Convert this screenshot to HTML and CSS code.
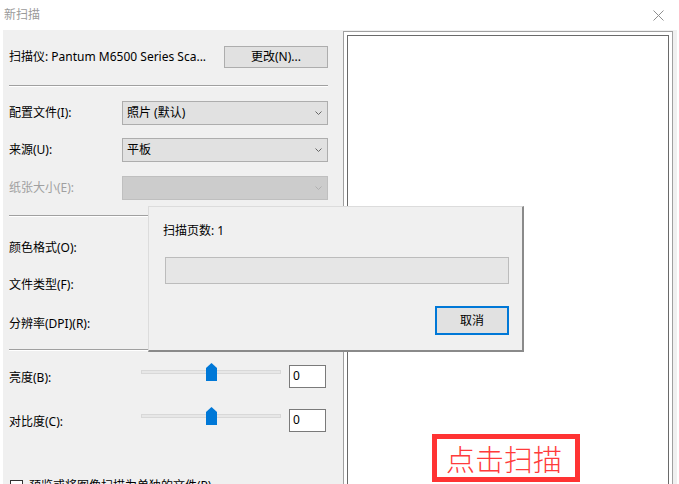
FILE: index.html
```html
<!DOCTYPE html>
<html lang="zh-CN">
<head>
<meta charset="utf-8">
<title>新扫描</title>
<link rel="stylesheet" href="styles.css">
</head>
<body>
<div class="titlebar">
  <span class="title">新扫描</span>
  <svg class="close" viewBox="0 0 11 11" width="11" height="11"><path d="M0.5 0.5 L10.5 10.5 M10.5 0.5 L0.5 10.5" stroke="#8f8f8f" stroke-width="1" fill="none"/></svg>
</div>
<div class="main">
  <div class="settings">
    <div class="row scanner">
      <span>扫描仪: Pantum M6500 Series Sca...</span>
      <button class="btn">更改(N)...</button>
    </div>
    <div class="sep sep1"></div>
    <div class="row field mt14">
      <span class="label">配置文件(I):</span>
      <div class="select"><span>照片 (默认)</span><svg class="chev" viewBox="0 0 7 4" width="7" height="4"><path d="M0.5 0.5 L3.5 3.5 L6.5 0.5" stroke="#666" fill="none"/></svg></div>
    </div>
    <div class="row field mt13">
      <span class="label">来源(U):</span>
      <div class="select"><span>平板</span><svg class="chev" viewBox="0 0 7 4" width="7" height="4"><path d="M0.5 0.5 L3.5 3.5 L6.5 0.5" stroke="#666" fill="none"/></svg></div>
    </div>
    <div class="row field mt14">
      <span class="label disabled">纸张大小(E):</span>
      <div class="select off"><span></span><svg class="chev" viewBox="0 0 7 4" width="7" height="4"><path d="M0.5 0.5 L3.5 3.5 L6.5 0.5" stroke="#b0b0b0" fill="none"/></svg></div>
    </div>
    <div class="sep sep2"></div>
    <div class="row field mt19"><span class="label">颜色格式(O):</span></div>
    <div class="row field mt13"><span class="label">文件类型(F):</span></div>
    <div class="row field mt15"><span class="label">分辨率(DPI)(R):</span></div>
    <div class="sep sep3"></div>
    <div class="row adjust mt14">
      <span class="alabel">亮度(B):</span>
      <div class="slider"><div class="track"></div><svg class="thumb" viewBox="0 0 11 18" width="11" height="18"><path d="M0 5 L5.5 0 L11 5 L11 18 L0 18 Z" fill="#0078d7"/></svg></div>
      <div class="num">0</div>
    </div>
    <div class="row adjust mt21">
      <span class="alabel">对比度(C):</span>
      <div class="slider"><div class="track"></div><svg class="thumb" viewBox="0 0 11 18" width="11" height="18"><path d="M0 5 L5.5 0 L11 5 L11 18 L0 18 Z" fill="#0078d7"/></svg></div>
      <div class="num">0</div>
    </div>
    <div class="row check">
      <span class="box"></span>
      <span>预览或将图像扫描为单独的文件(P)</span>
    </div>
  </div>
  <div class="preview"><div class="preview-inner"></div></div>
</div>

<div class="progress-dialog">
  <div class="pages">扫描页数: 1</div>
  <div class="bar"></div>
  <div class="actions"><button class="btn cancel">取消</button></div>
</div>

<div class="callout">点击扫描</div>
</body>
</html>
```
FILE: styles.css
```css
html, body {
  margin: 0;
  height: 100%;
  overflow: hidden;
}
body {
  background: #fff;
  font-family: "Noto Sans", "Noto Sans CJK SC", sans-serif;
  font-size: 12px;
  line-height: 14px;
  color: #000;
  position: relative;
}
.titlebar {
  height: 30px;
  display: flex;
  align-items: center;
  justify-content: space-between;
  padding: 0 15px 0 4px;
  box-sizing: border-box;
}
.title {
  color: #9a9a9a;
}
.close {
  display: block;
}
.main {
  display: flex;
  margin: 0 2px 0 3px;
  height: 454px;
  background: #f0f0f0;
  overflow: hidden;
}
.settings {
  width: 340px;
  flex: none;
  box-sizing: border-box;
  padding: 16px 15px 0 6px;
  display: flex;
  flex-direction: column;
}
.settings > * {
  flex: none;
}
.row {
  display: flex;
  align-items: center;
}
.scanner {
  height: 22px;
  justify-content: space-between;
}
.btn {
  width: 104px;
  height: 22px;
  background: #e1e1e1;
  border: 1px solid #adadad;
  font: inherit;
  color: #000;
  padding: 0;
  box-sizing: border-box;
}
.sep {
  border-top: 1px solid #a0a0a0;
  border-bottom: 1px solid #fff;
}
.sep1 { margin-top: 17px; }
.sep2 { margin-top: 15px; }
.sep3 { margin-top: 13px; }
.mt13 { margin-top: 13px; }
.mt14 { margin-top: 14px; }
.mt15 { margin-top: 15px; }
.mt19 { margin-top: 19px; }
.mt21 { margin-top: 21px; }
.field {
  height: 24px;
}
.label {
  width: 113px;
  flex: none;
}
.disabled {
  color: #a0a0a0;
}
.select {
  width: 206px;
  height: 24px;
  box-sizing: border-box;
  background: #e1e1e1;
  border: 1px solid #adadad;
  display: flex;
  align-items: center;
  justify-content: space-between;
  padding: 0 5px 0 4px;
}
.select.off {
  background: #cccccc;
  border-color: #bfbfbf;
}
.chev {
  display: block;
}
.adjust {
  height: 23px;
}
.alabel {
  width: 132px;
  flex: none;
  padding-top: 3px;
}
.slider {
  position: relative;
  width: 140px;
  height: 18px;
  align-self: flex-start;
  margin-top: -2px;
  display: flex;
  align-items: center;
}
.track {
  width: 100%;
  height: 4px;
  box-sizing: border-box;
  background: #e7e7e7;
  border: 1px solid #d8d8d8;
}
.thumb {
  position: absolute;
  left: 65px;
  top: 0;
}
.num {
  margin-left: 8px;
  width: 37px;
  height: 23px;
  box-sizing: border-box;
  background: #fff;
  border: 1px solid #7a7a7a;
  padding: 3px 0 0 3px;
}
.check {
  margin-top: 47px;
  height: 14px;
}
.box {
  width: 13px;
  height: 13px;
  box-sizing: border-box;
  background: #fff;
  border: 1px solid #333;
  margin: 0 6px 0 1px;
}
.preview {
  flex: 1;
  margin: 1px 4px 0 0;
  border: 1px solid #a0a0a0;
  border-bottom: none;
  background: #fff;
  padding: 3px 3px 0 3px;
  display: flex;
}
.preview-inner {
  flex: 1;
  border: 1px solid #6a6a6a;
  border-bottom: none;
  background: #fff;
}
.progress-dialog {
  position: absolute;
  left: 148px;
  top: 206px;
  width: 376px;
  height: 146px;
  box-sizing: border-box;
  background: #f0f0f0;
  border: 1px solid #dcdcdc;
  border-right: 2px solid #8a8a8a;
  border-bottom: 2px solid #8a8a8a;
  padding: 17px 0 0 16px;
  display: flex;
  flex-direction: column;
  align-items: flex-start;
}
.pages {
  margin-left: -2px;
}
.bar {
  margin-top: 19px;
  width: 344px;
  height: 27px;
  box-sizing: border-box;
  background: #e6e6e6;
  border: 1px solid #bcbcbc;
}
.actions {
  margin-top: 22px;
  width: 344px;
  display: flex;
  justify-content: flex-end;
}
.cancel {
  width: 74px;
  height: 29px;
  border: 2px solid #0078d7;
}
.callout {
  position: absolute;
  left: 432px;
  top: 434px;
  width: 148px;
  height: 48px;
  box-sizing: border-box;
  border: 5px solid #ff3333;
  background: #fff;
  color: #ff3b3b;
  font-family: "Noto Sans CJK SC", sans-serif;
  font-size: 29px;
  font-weight: 300;
  line-height: 38px;
  padding-left: 9px;
}
```
